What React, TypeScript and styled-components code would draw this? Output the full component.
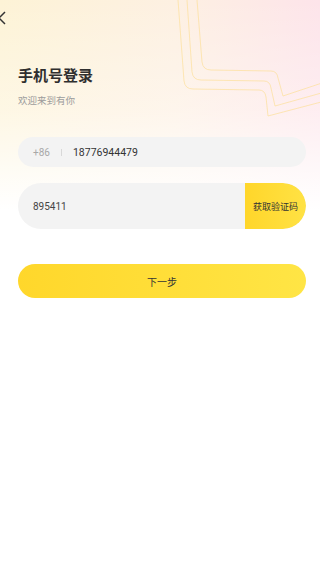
import styled, { createGlobalStyle } from 'styled-components'

const GlobalStyle = createGlobalStyle`
  html, body {
    margin: 0;
    padding: 0;
    background: #fff;
  }
  body {
    font-family: Roboto, "Noto Sans CJK SC", sans-serif;
    color: #333;
  }
  * {
    box-sizing: border-box;
  }
`

export default function App () {
  return (
    <Page>
      <GlobalStyle />
      <Decoration viewBox='0 0 150 130' width='150' height='130'>
        <path d='M27 0 L32 62 Q33 70 41 70 L101 71 Q107 71 108 78 L113 96 L155 82' />
        <path d='M17 0 L22 72 Q23 80 31 80 L94 81 Q100 81 101 88 L105 106 L155 92' />
        <path d='M8 0 L14 81 Q15 89 23 89 L89 90 Q95 90 96 97 L98 116 L155 101' />
      </Decoration>
      <Content>
        <Header>
          <BackButton aria-label='back'>
            <svg width='10' height='14' viewBox='0 0 10 14'>
              <path d='M6 1 L0 7 L6 13' fill='none' stroke='#333' strokeWidth='1.5' />
            </svg>
          </BackButton>
        </Header>

        <Title>手机号登录</Title>
        <Subtitle>欢迎来到有你</Subtitle>

        <Field>
          <Prefix>+86</Prefix>
          <Divider />
          <Value>18776944479</Value>
        </Field>

        <CodeField>
          <CodeValue>895411</CodeValue>
          <CodeButton>获取验证码</CodeButton>
        </CodeField>

        <NextButton>下一步</NextButton>
      </Content>
    </Page>
  )
}

const Page = styled.div`
  position: relative;
  width: 320px;
  min-height: 585px;
  overflow: hidden;
  background:
    linear-gradient(to bottom, rgba(255, 255, 255, 0) 0, rgba(255, 255, 255, 0.35) 110px, #fff 210px),
    linear-gradient(to right, #fdf3d6 0%, #fdf0e2 55%, #fde4ea 100%);
`

const Decoration = styled.svg`
  position: absolute;
  top: 0;
  right: 0;
  pointer-events: none;

  path {
    fill: none;
    stroke: #fde1a0;
    stroke-width: 0.9;
    opacity: 0.85;
  }
`

const Content = styled.div`
  position: relative;
  display: flex;
  flex-direction: column;
  padding: 0 14px 0 18px;
`

const Header = styled.div`
  display: flex;
  align-items: center;
  height: 36px;
  margin-left: -19px;
`

const BackButton = styled.div`
  display: flex;
  align-items: center;
  width: 24px;
  height: 24px;
`

const Title = styled.h1`
  margin: 30px 0 0;
  font-size: 15px;
  line-height: 20px;
  font-weight: 700;
  color: #2f2f2f;
`

const Subtitle = styled.p`
  margin: 9px 0 0;
  font-size: 9.5px;
  line-height: 12px;
  color: #9c9c9c;
`

const Field = styled.div`
  display: flex;
  align-items: center;
  height: 30px;
  margin-top: 30px;
  padding: 0 15px;
  border-radius: 15px;
  background: #f3f3f3;
`

const Prefix = styled.span`
  font-size: 10px;
  color: #a8a8a8;
`

const Divider = styled.span`
  width: 1px;
  height: 7px;
  margin: 0 11px;
  background: #d8d8d8;
`

const Value = styled.span`
  font-size: 10.5px;
  color: #333;
`

const CodeField = styled.div`
  display: flex;
  align-items: stretch;
  height: 46px;
  margin-top: 16px;
  border-radius: 23px;
  overflow: hidden;
  background: #f3f3f3;
`

const CodeValue = styled.span`
  flex: 1;
  display: flex;
  align-items: center;
  padding-left: 15px;
  font-size: 10px;
  color: #444;
`

const CodeButton = styled.div`
  display: flex;
  align-items: center;
  width: 61px;
  padding-left: 8px;
  font-size: 9px;
  color: #333;
  background: linear-gradient(to right, #ffd62a, #ffe244);
  border-radius: 0 23px 23px 0;
`

const NextButton = styled.div`
  display: flex;
  align-items: center;
  justify-content: center;
  height: 34px;
  margin-top: 35px;
  border-radius: 17px;
  font-size: 10px;
  color: #333;
  background: linear-gradient(to right, #ffd72b, #ffe545);
`
